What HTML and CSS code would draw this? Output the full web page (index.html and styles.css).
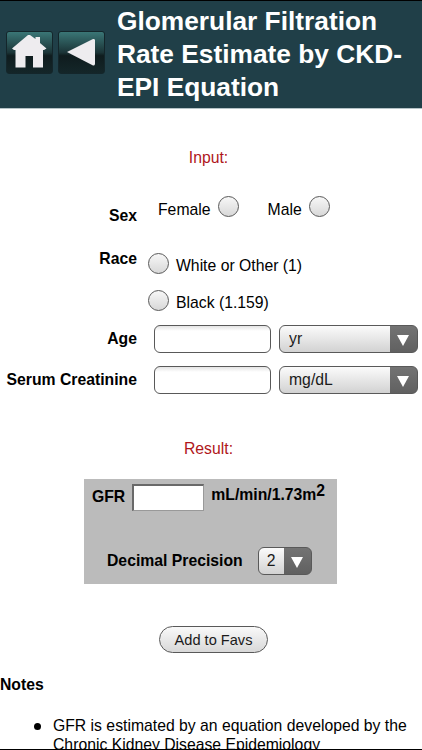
FILE: index.html
```html
<!DOCTYPE html>
<html>
<head>
	<meta charset="UTF-8">
	<title>Glomerular Filtration Rate Estimate by CKD-EPI Equation</title>
	<link rel="stylesheet" href="styles.css">
</head>
<body>
	<div id="header">
		<a class="navBtn" id="home">
			<svg width="47" height="43" viewBox="0 0 47 43">
				<path fill="#eeecef" d="M6 17.5 L22 4 L24 4 L29.5 8 L29.5 6 L34 6 L34 12 L40.5 17.5 L38 19 L37 19 L37 36.5 L27 36.5 L27 25 L19.5 25 L19.5 36.5 L9.5 36.5 L9.5 19 L8 19 Z"/>
			</svg>
		</a>
		<a class="navBtn" id="back">
			<svg width="47" height="43" viewBox="0 0 47 43">
				<path fill="#eeecef" d="M9 21 L35 8 Q36.5 7.5 37 9 L37 33 Q36.5 35 35 34.5 Z"/>
			</svg>
		</a>
		<h1>Glomerular Filtration Rate Estimate by CKD-EPI Equation</h1>
	</div>

	<form>
		<h2 id="inputTitle">Input:</h2>

		<div class="row" id="rowSex">
			<b>Sex</b>
			<div class="sexOptions">
				<label><span>Female</span> <input type="radio" name="sex"></label>
				<label><span>Male</span> <input type="radio" name="sex"></label>
			</div>
		</div>

		<div class="row" id="rowRace">
			<b>Race</b>
			<div class="raceOptions">
				<label><input type="radio" name="race"> <span>White or Other (1)</span></label>
				<label><input type="radio" name="race"> <span>Black (1.159)</span></label>
			</div>
		</div>

		<div class="row field">
			<b>Age</b>
			<input type="text" class="box">
			<div class="select"><select><option>yr</option></select></div>
		</div>

		<div class="row field">
			<b>Serum Creatinine</b>
			<input type="text" class="box">
			<div class="select"><select><option>mg/dL</option></select></div>
		</div>

		<h2 id="resultTitle">Result:</h2>

		<div id="result">
			<div class="gfr">
				<b>GFR</b>
				<input type="text" id="gfrValue">
				<b class="unit">mL/min/1.73m<sup>2</sup></b>
			</div>
			<div class="precision">
				<b>Decimal Precision</b>
				<div class="select small"><select><option>2</option></select></div>
			</div>
		</div>

		<button type="button" id="favs">Add to Favs</button>
	</form>

	<div id="notes">
		<b>Notes</b>
		<ul>
			<li>GFR is estimated by an equation developed by the Chronic Kidney Disease Epidemiology</li>
		</ul>
	</div>
</body>
</html>
```
FILE: styles.css
```css
*{
	box-sizing: border-box;
}

body{
	margin: 0;
	height: 750px;
	overflow: hidden;
	border-top: 1px solid #000;
	border-bottom: 1px solid #000;
	background: #fff;
	color: #000;
	font-family: "Liberation Sans", Arial, sans-serif;
	font-size: 15.75px;
	line-height: 19px;
}

#header{
	display: flex;
	height: 108px;
	padding-left: 6px;
	background: #203f48;
	border-bottom: 1px solid #b5c3c7;
}

.navBtn{
	width: 47px;
	height: 43px;
	margin: 30px 5px 0 0;
	border: 1px solid #14262b;
	border-radius: 3px;
	background: linear-gradient(#3a7676, #1b3437 50%, #0f1c1e 58%, #142629);
}

.navBtn svg{
	display: block;
	margin: -1px;
}

#header h1{
	margin: 4px 0 0 7px;
	color: #fff;
	font-size: 26.3px;
	line-height: 33px;
}

h2{
	margin: 0;
	color: #b0171b;
	font-size: 15.75px;
	font-weight: normal;
	text-align: center;
}

#inputTitle{
	padding: 39px 5px 0 0;
}

#resultTitle{
	padding: 32px 5px 0 0;
}

.row{
	display: grid;
	grid-template-columns: 137px 1fr;
}

.row > b{
	text-align: right;
}

label{
	display: flex;
	align-items: center;
}

input[type=radio]{
	appearance: none;
	width: 21px;
	height: 21px;
	margin: 0;
	border: 1px solid #595959;
	border-radius: 50%;
	background: linear-gradient(#f7f7f7, #d8d8d8);
}

#rowSex{
	height: 82px;
	padding-top: 29px;
}

#rowSex > b{
	padding-top: 10px;
}

.sexOptions{
	display: flex;
	align-items: flex-start;
	gap: 29px;
	padding-left: 21px;
}

.sexOptions label{
	gap: 7px;
	height: 21px;
}

.sexOptions span{
	padding-top: 5px;
}

#rowRace{
	height: 76px;
}

.raceOptions{
	padding: 4px 0 0 11px;
}

.raceOptions label{
	gap: 7px;
	height: 21px;
	margin-bottom: 16px;
}

.raceOptions span{
	padding-top: 4px;
}

.field{
	grid-template-columns: 137px 117px 139px;
	height: 28px;
	margin-bottom: 13px;
	line-height: 27px;
}

.field .box{
	width: 117px;
	height: 28px;
	margin-left: 17px;
}

.field .select{
	margin-left: 25px;
}

.box{
	border: 1px solid #595959;
	border-radius: 6px;
	background: linear-gradient(#e4e4e4, #fff 5px);
}

.select{
	position: relative;
	width: 139px;
	height: 28px;
	border: 1px solid #595959;
	border-radius: 6px;
	background: linear-gradient(to right, transparent calc(100% - 27px), rgba(0,0,0,.54) calc(100% - 27px)), linear-gradient(#fbfbfb, #d2d2d2);
}

.select select{
	display: block;
	appearance: none;
	width: 100%;
	height: 25px;
	padding: 0 8px 1px 9px;
	border: 0;
	background: none;
	color: #1a1a1a;
	font: 15.75px "Liberation Sans", Arial, sans-serif;
}

/* arrow */
.select::after{
	content: "";
	position: absolute;
	right: 8px;
	top: 9px;
	border: 6px solid transparent;
	border-top: 11px solid #fff;
	border-bottom: 0;
}

#result{
	width: 253px;
	height: 105px;
	margin: 21px 0 0 84px;
	padding: 5px 0 0 8px;
	background: #bbb;
}

.gfr{
	display: flex;
	height: 63px;
}

.gfr b{
	padding-top: 3px;
}

.gfr .unit{
	padding-top: 1px;
}

.gfr sup{
	position: relative;
	top: -4px;
	font-size: 15.75px;
	line-height: 0;
	vertical-align: baseline;
}

#gfrValue{
	width: 72px;
	height: 27px;
	margin: 0 7px;
	border: 2px solid;
	border-color: #696969 #999 #999 #696969;
	border-width: 2px 1px 1px 2px;
	background: #fff;
}

.precision{
	display: flex;
	gap: 15px;
	padding-left: 15px;
	line-height: 27px;
}

.select.small{
	width: 54px;
}

.select.small select{
	padding-left: 8px;
}

#favs{
	display: block;
	width: 109px;
	height: 27px;
	margin: 42px 0 0 159px;
	padding: 0;
	border: 1px solid #595959;
	border-radius: 14px;
	background: linear-gradient(#f9f9f9, #d8d8d8);
	color: #1a1a1a;
	font: 14.6px "Liberation Sans", Arial, sans-serif;
}

#notes{
	padding: 22px 0 0;
}

#notes ul{
	margin: 22px 0 0;
	padding: 0 0 0 53px;
	list-style: none;
}

#notes li::before{
	content: "";
	float: left;
	width: 7px;
	height: 7px;
	margin: 7px 0 0 -19px;
	border-radius: 50%;
	background: #000;
}
```
